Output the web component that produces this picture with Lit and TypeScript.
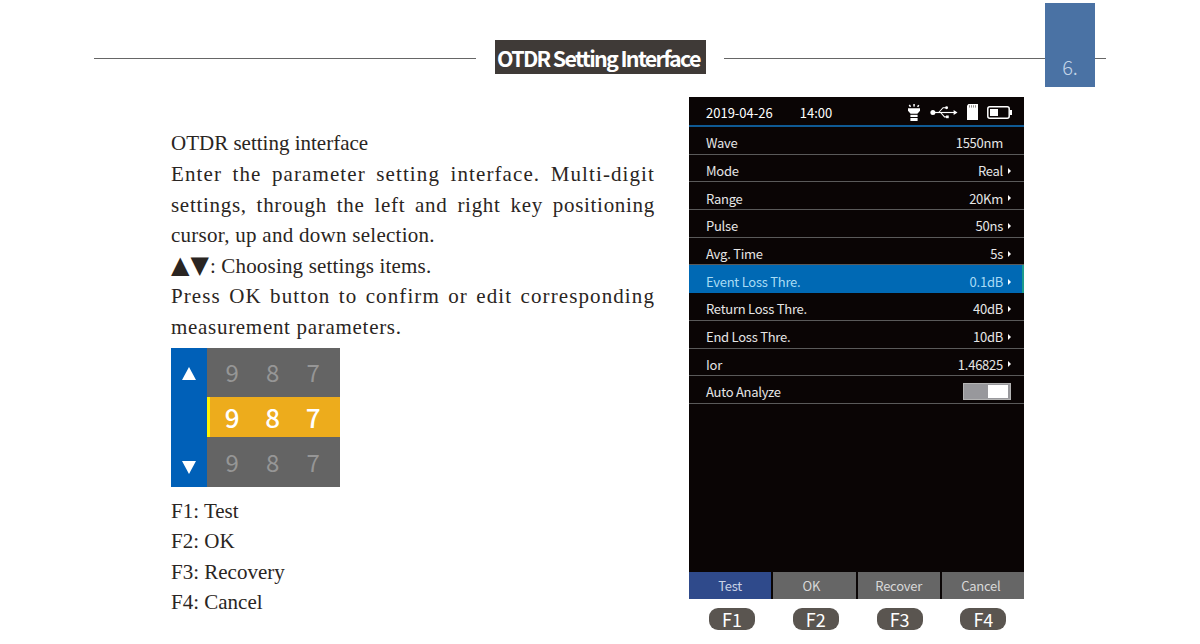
import { LitElement, css, html, svg } from 'lit';
import { customElement } from 'lit/decorators.js';

const rows = [
  { label: 'Wave', value: '1550nm', arrow: false },
  { label: 'Mode', value: 'Real', arrow: true },
  { label: 'Range', value: '20Km', arrow: true },
  { label: 'Pulse', value: '50ns', arrow: true },
  { label: 'Avg. Time', value: '5s', arrow: true },
  { label: 'Event Loss Thre.', value: '0.1dB', arrow: true, active: true },
  { label: 'Return Loss Thre.', value: '40dB', arrow: true },
  { label: 'End Loss Thre.', value: '10dB', arrow: true },
  { label: 'Ior', value: '1.46825', arrow: true },
];

const softKeys = ['Test', 'OK', 'Recover', 'Cancel'];
const fnKeys = ['F1', 'F2', 'F3', 'F4'];
const legend = ['F1: Test', 'F2: OK', 'F3: Recovery', 'F4: Cancel'];
const digits = ['9', '8', '7'];

const lampIcon = svg`<svg class="ico lamp" width="12" height="17" viewBox="0 0 12 17" fill="#fff">
  <rect x="5.3" y="0" width="1.5" height="2.6"/>
  <rect x="1.2" y="0.8" width="1.5" height="2.2" transform="rotate(-30 2 2)"/>
  <rect x="9.4" y="0.8" width="1.5" height="2.2" transform="rotate(30 10 2)"/>
  <path d="M0 4.2h12v2.6l-2.6 3H2.6L0 6.8z"/>
  <rect x="2.4" y="10.8" width="7.2" height="2.2"/>
  <rect x="2.4" y="14" width="7.2" height="3"/>
</svg>`;

const usbIcon = svg`<svg class="ico" width="28" height="13" viewBox="0 0 29 13" fill="#fff">
  <circle cx="3" cy="6.5" r="2.6"/>
  <rect x="4" y="5.9" width="21" height="1.2"/>
  <path d="M24.5 4l4 2.5-4 2.5z"/>
  <path d="M9 6.5l4.5-5h3" fill="none" stroke="#fff" stroke-width="1.1"/>
  <path d="M11 6.5l4 4.5h2" fill="none" stroke="#fff" stroke-width="1.1"/>
  <circle cx="17.2" cy="1.6" r="1.5"/>
  <rect x="16.6" y="9.6" width="2.8" height="2.8"/>
</svg>`;

const sdIcon = svg`<svg class="ico" width="11" height="16" viewBox="0 0 11 16">
  <path d="M1.5 0H11v16H0V1.5z" fill="#fff"/>
  <path d="M2.5 1.2v2.4M4.5 1.2v2.4M6.5 1.2v2.4M8.5 1.2v2.4" stroke="#77736f" stroke-width="0.8"/>
</svg>`;

const batteryIcon = svg`<svg class="ico" width="25" height="13" viewBox="0 0 25 13">
  <rect x="0.8" y="0.8" width="21.4" height="11.4" rx="2" fill="none" stroke="#fff" stroke-width="1.5"/>
  <rect x="23" y="4" width="2" height="5" fill="#fff"/>
  <rect x="3" y="3" width="8" height="7" fill="#fff"/>
</svg>`;

@customElement('digit-picker')
class DigitPicker extends LitElement {
  static styles = css`
    :host {
      display: flex;
      width: 169px;
      height: 139px;
      font-family: 'Noto Sans CJK SC', 'Noto Sans', sans-serif;
    }
    .rail {
      width: 36px;
      background: #0060b8;
      display: flex;
      flex-direction: column;
      align-items: center;
      justify-content: space-between;
      padding: 19px 0 13px;
      box-sizing: border-box;
    }
    .tri {
      width: 0;
      height: 0;
      border-left: 7.5px solid transparent;
      border-right: 7.5px solid transparent;
    }
    .tri.up {
      border-bottom: 13px solid #fff;
    }
    .tri.down {
      border-top: 13px solid #fff;
    }
    .wheel {
      flex: 1;
      display: grid;
      grid-template-rows: 49px 40px 50px;
      background: #646464;
    }
    .line {
      display: grid;
      grid-template-columns: repeat(3, 40.5px);
      padding-left: 5px;
      align-items: center;
      justify-items: center;
      font-size: 24px;
      line-height: 1;
      color: #969696;
    }
    .line.on {
      background: #edac1c;
      color: #fff;
      border-left: 3px solid #fff200;
      padding-left: 2px;
      font-size: 26px;
      font-weight: 500;
    }
  `;

  render() {
    return html`
      <div class="rail">
        <div class="tri up"></div>
        <div class="tri down"></div>
      </div>
      <div class="wheel">
        ${['', 'on', ''].map(
          (c) => html`<div class="line ${c}">${digits.map((d) => html`<span>${d}</span>`)}</div>`
        )}
      </div>
    `;
  }
}

@customElement('otdr-screen')
class OtdrScreen extends LitElement {
  static styles = css`
    :host {
      display: flex;
      flex-direction: column;
      width: 335px;
      height: 502px;
      background: #0a0505;
      color: #e6e6e6;
      font-family: 'Noto Sans CJK SC', 'Noto Sans', sans-serif;
      font-size: 13px;
      letter-spacing: -0.25px;
    }
    .status {
      height: 30px;
      box-sizing: border-box;
      border-bottom: 2px solid #0f5a94;
      display: flex;
      align-items: center;
      padding: 2px 12px 0 17px;
      color: #fff;
      letter-spacing: 0;
    }
    .time {
      margin-left: 27px;
    }
    .icons {
      margin-left: auto;
      display: flex;
      align-items: center;
    }
    .ico {
      display: block;
    }
    .icons svg + svg {
      margin-left: 9px;
    }
    .icons .lamp {
      margin-right: 1px;
    }
    .row {
      height: 27.7px;
      box-sizing: border-box;
      border-bottom: 1px solid #5a5a5a;
      display: flex;
      align-items: center;
      justify-content: space-between;
      padding: 5px 13px 0 17px;
    }
    .row.active {
      background: #0069b4;
      color: #a9dcf5;
      border-bottom: none;
      box-shadow: inset -2px 0 0 #1c9a8c;
    }
    .val {
      display: flex;
      align-items: center;
    }
    .arrow {
      width: 0;
      height: 0;
      margin-left: 5px;
      border-top: 3px solid transparent;
      border-bottom: 3px solid transparent;
      border-left: 3px solid currentColor;
      color: #fff;
    }
    .plain {
      margin-right: 8px;
    }
    .row.toggle {
      padding-top: 3px;
    }
    .switch {
      width: 48px;
      height: 17px;
      box-sizing: border-box;
      background: #98989c;
      border: 1px solid #b4b4b4;
      display: flex;
      justify-content: flex-end;
      padding: 1px 2px;
    }
    .switch i {
      width: 20px;
      background: #fff;
    }
    .keys {
      margin-top: auto;
      display: grid;
      grid-template-columns: repeat(4, 1fr);
      column-gap: 2px;
      height: 27px;
      background: #0a0505;
    }
    .key {
      background: #666;
      color: #d8d8d8;
      display: flex;
      align-items: center;
      justify-content: center;
    }
    .key:nth-child(2) {
      padding-right: 6px;
    }
    .key:nth-child(4) {
      padding-right: 4px;
    }
    .key.on {
      background: #2f4a8b;
      color: #c9d2e6;
    }
  `;

  render() {
    return html`
      <div class="status">
        <span>2019-04-26</span>
        <span class="time">14:00</span>
        <div class="icons">${lampIcon}${usbIcon}${sdIcon}${batteryIcon}</div>
      </div>
      ${rows.map(
        (r) => html`
          <div class="row ${r.active ? 'active' : ''}">
            <span>${r.label}</span>
            <span class="val">
              <span class=${r.arrow ? '' : 'plain'}>${r.value}</span>
              ${r.arrow ? html`<span class="arrow"></span>` : ''}
            </span>
          </div>
        `
      )}
      <div class="row toggle">
        <span>Auto Analyze</span>
        <div class="switch"><i></i></div>
      </div>
      <div class="keys">
        ${softKeys.map((k, i) => html`<div class="key ${i === 0 ? 'on' : ''}">${k}</div>`)}
      </div>
    `;
  }
}

@customElement('app-root')
export class AppRoot extends LitElement {
  static styles = css`
    :host {
      display: block;
      position: relative;
      width: 1200px;
      height: 644px;
      overflow: hidden;
      background: #fff;
      color: #2a2522;
      font-family: 'Liberation Serif', 'DejaVu Serif', serif;
    }
    .head {
      display: flex;
      align-items: center;
      margin: 0 94px;
      padding-top: 40px;
    }
    .rule {
      flex: 1;
      height: 1px;
      margin-top: 2px;
      background: #666;
    }
    .title {
      margin: 0 18px 0 19px;
      width: 211px;
      height: 34px;
      box-sizing: border-box;
      padding-left: 2px;
      background: #3f3a37;
      color: #fff;
      font-family: 'Noto Sans CJK SC', 'Noto Sans', sans-serif;
      font-size: 21.5px;
      font-weight: 700;
      letter-spacing: -1.7px;
      line-height: 35px;
      white-space: nowrap;
    }
    .tab {
      position: absolute;
      left: 1045px;
      top: 3px;
      width: 50px;
      height: 84px;
      background: #4a72a4;
      color: #c4d5e8;
      font-family: 'Noto Sans CJK SC', 'Noto Sans', sans-serif;
      font-size: 20px;
      font-weight: 300;
      display: flex;
      align-items: flex-end;
      justify-content: center;
      line-height: 41px;
    }
    .main {
      display: flex;
      padding: 23px 0 0 171px;
    }
    .copy {
      width: 484px;
      margin-right: 34px;
      padding-top: 31.4px;
      font-size: 21px;
      line-height: 30.6px;
    }
    .copy p {
      margin: 0;
      white-space: nowrap;
    }
    .fit {
      text-align: justify;
      text-align-last: justify;
    }
    .wide {
      letter-spacing: 1.1px;
    }
    .mid {
      letter-spacing: 0.7px;
    }
    .snug {
      letter-spacing: 0.27px;
    }
    .keys-line {
      letter-spacing: 0.17px;
    }
    .tris {
      font-family: 'DejaVu Sans', sans-serif;
      font-size: 24px;
      line-height: 1;
      letter-spacing: 1px;
    }
    digit-picker {
      margin: 5.4px 0 8.6px;
    }
    .side {
      display: flex;
      flex-direction: column;
    }
    .fns {
      display: grid;
      grid-template-columns: repeat(4, 46px);
      column-gap: 37.8px;
      padding: 9px 0 0 20px;
    }
    .fn {
      height: 22px;
      border-radius: 9px;
      background: #5a5550;
      color: #fff;
      font-family: 'Noto Sans CJK SC', 'Noto Sans', sans-serif;
      font-size: 18px;
      line-height: 22px;
      text-align: center;
    }
  `;

  render() {
    return html`
      <div class="head">
        <div class="rule"></div>
        <div class="title">OTDR Setting Interface</div>
        <div class="rule"></div>
      </div>
      <div class="tab">6.</div>
      <div class="main">
        <div class="copy">
          <p>OTDR setting interface</p>
          <p class="fit wide">Enter the parameter setting interface. Multi-digit</p>
          <p class="fit mid">settings, through the left and right key positioning</p>
          <p class="snug">cursor, up and down selection.</p>
          <p class="keys-line"><span class="tris">▲▼</span>: Choosing settings items.</p>
          <p class="fit wide">Press OK button to confirm or edit corresponding</p>
          <p class="mid">measurement parameters.</p>
          <digit-picker></digit-picker>
          ${legend.map((l) => html`<p>${l}</p>`)}
        </div>
        <div class="side">
          <otdr-screen></otdr-screen>
          <div class="fns">${fnKeys.map((k) => html`<div class="fn">${k}</div>`)}</div>
        </div>
      </div>
    `;
  }
}
